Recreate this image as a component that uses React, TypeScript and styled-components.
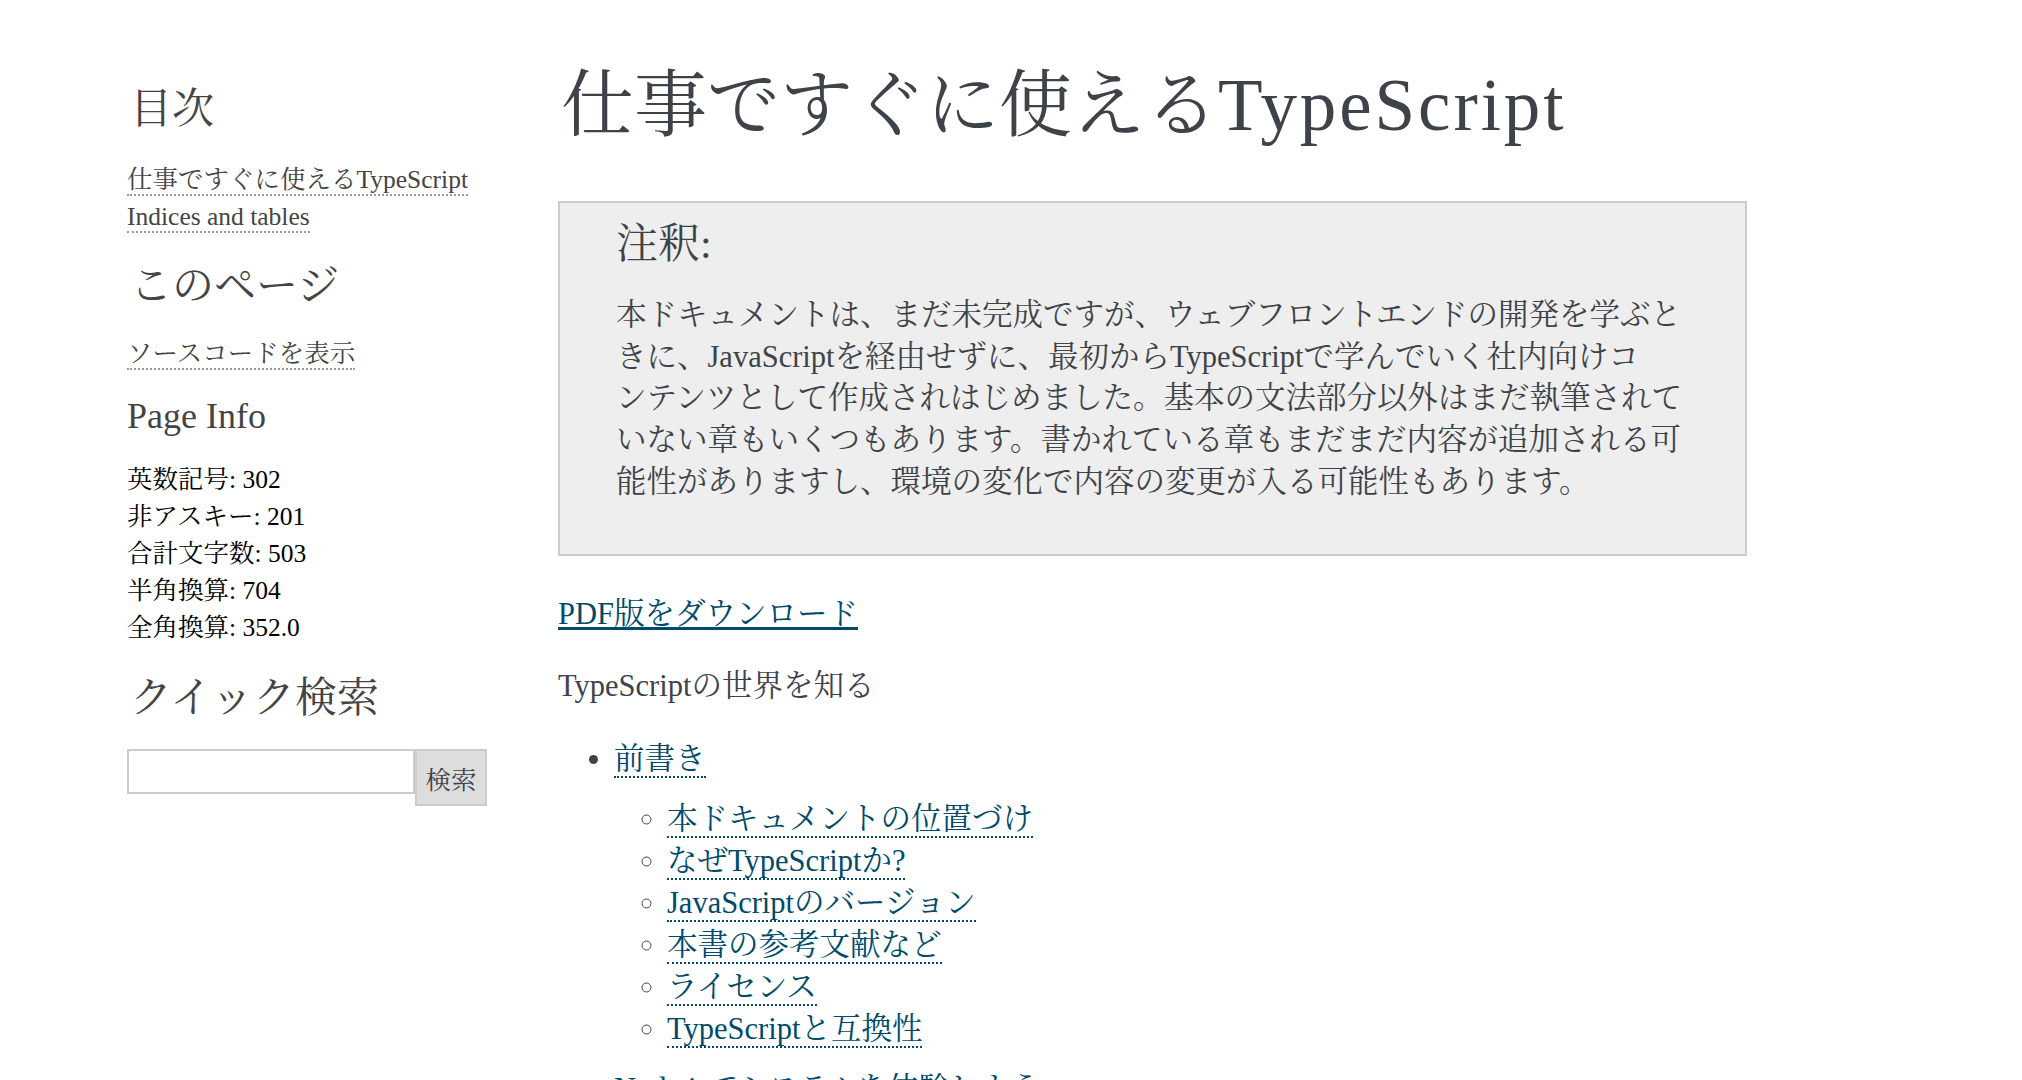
import styled, { createGlobalStyle } from 'styled-components';

const GlobalStyle = createGlobalStyle`
  html, body {
    margin: 0;
    padding: 0;
    background: #fff;
  }
  body {
    font-family: "Liberation Serif", "Noto Serif CJK JP", "Noto Sans CJK JP", serif;
    color: #3e4349;
  }
`;

const Page = styled.div`
  display: flex;
  align-items: flex-start;
  padding-left: 127px;
  height: 1080px;
  overflow: hidden;
`;

const Sidebar = styled.aside`
  width: 431px;
  flex-shrink: 0;
  padding-top: 84px;
  color: #444;
`;

const SideHeading = styled.h3<{ $gap?: number }>`
  margin: ${(p) => p.$gap ?? 0}px 0 0 0;
  font-size: 42px;
  line-height: 50px;
  font-weight: normal;
  color: #444;
  padding-left: 3px;
`;

const SmallHeading = styled.h3`
  margin: 22px 0 0 0;
  font-size: 36px;
  line-height: 44px;
  font-weight: normal;
  color: #444;
`;

const SideList = styled.ul<{ $gap?: number }>`
  list-style: none;
  margin: ${(p) => p.$gap ?? 24}px 0 0 0;
  padding: 0;
  font-size: 25.5px;
  line-height: 37px;
`;

const SideLink = styled.a`
  color: #444;
  text-decoration: none;
  border-bottom: 2px dotted #999;
`;

const InfoList = styled.ul`
  list-style: none;
  margin: 23px 0 0 0;
  padding: 0;
  font-size: 25.5px;
  line-height: 37px;
  color: #000;
`;

const SearchRow = styled.form`
  display: flex;
  align-items: flex-start;
  margin-top: 26px;
`;

const SearchInput = styled.input`
  box-sizing: border-box;
  width: 288px;
  height: 45px;
  border: 2px solid #ccc;
  margin: 0;
  padding: 0 6px;
  font-size: 24px;
  background: #fff;
`;

const SearchButton = styled.button`
  box-sizing: border-box;
  width: 72px;
  height: 57px;
  margin: 0;
  border: 2px solid #ccc;
  background: #ddd;
  color: #3e4349;
  font-family: "Liberation Serif", "Noto Serif CJK JP", "Noto Sans CJK JP", serif;
  font-size: 25.5px;
  padding: 0;
`;

const Main = styled.main`
  width: 1189px;
  flex-shrink: 0;
  padding-top: 63px;
  font-size: 30.5px;
  line-height: 42px;
`;

const Title = styled.h1`
  margin: 0;
  font-size: 73px;
  line-height: 86px;
  font-weight: normal;
  color: #3e4349;
  padding-left: 3px;
`;

const TitleLatin = styled.span`
  letter-spacing: 0.04em;
`;

const Note = styled.div`
  margin-top: 52px;
  background: #eee;
  border: 2px solid #ccc;
  padding: 16px 20px 50px 56px;
`;

const NoteTitle = styled.p`
  margin: 0;
  font-size: 42px;
  line-height: 50px;
`;

const NoteText = styled.p`
  margin: 26px 0 0 0;
  font-size: 30.5px;
  line-height: 41.7px;
`;

const NoteLine = styled.span`
  display: block;
  white-space: nowrap;
`;

const Para = styled.p<{ $gap: number }>`
  margin: ${(p) => p.$gap}px 0 0 0;
`;

const DownloadLink = styled.a`
  color: #004b6b;
  text-decoration: underline;
  text-decoration-thickness: 3px;
  text-underline-offset: 3px;
`;

const TocList = styled.ul<{ $nested?: boolean }>`
  margin: ${(p) => (p.$nested ? '18px 0 0 0' : '31px 0 0 0')};
  padding-left: ${(p) => (p.$nested ? 53 : 56)}px;
  list-style: ${(p) => (p.$nested ? 'circle' : 'disc')};
  line-height: 42px;
`;

const TocItem = styled.li<{ $spaced?: boolean }>`
  margin-top: ${(p) => (p.$spaced ? 18 : 0)}px;
  &::marker {
    color: #3e4349;
  }
`;

const TocLink = styled.a`
  color: #004b6b;
  text-decoration: none;
  border-bottom: 2px dotted #004b6b;
`;

const noteLines = [
  '本ドキュメントは、まだ未完成ですが、ウェブフロントエンドの開発を学ぶと',
  'きに、JavaScriptを経由せずに、最初からTypeScriptで学んでいく社内向けコ',
  'ンテンツとして作成されはじめました。基本の文法部分以外はまだ執筆されて',
  'いない章もいくつもあります。書かれている章もまだまだ内容が追加される可',
  '能性がありますし、環境の変化で内容の変更が入る可能性もあります。',
];

const chapters = [
  '本ドキュメントの位置づけ',
  'なぜTypeScriptか?',
  'JavaScriptのバージョン',
  '本書の参考文献など',
  'ライセンス',
  'TypeScriptと互換性',
];

const pageInfo = [
  ['英数記号', '302'],
  ['非アスキー', '201'],
  ['合計文字数', '503'],
  ['半角換算', '704'],
  ['全角換算', '352.0'],
];

export default function App() {
  return (
    <>
      <GlobalStyle />
      <Page>
        <Sidebar>
          <SideHeading>目次</SideHeading>
          <SideList $gap={27}>
            <li>
              <SideLink href="#">仕事ですぐに使えるTypeScript</SideLink>
            </li>
            <li>
              <SideLink href="#">Indices and tables</SideLink>
            </li>
          </SideList>
          <SideHeading $gap={26}>このページ</SideHeading>
          <SideList>
            <li>
              <SideLink href="#">ソースコードを表示</SideLink>
            </li>
          </SideList>
          <SmallHeading>Page Info</SmallHeading>
          <InfoList>
            {pageInfo.map(([label, value]) => (
              <li key={label}>
                {label}: {value}
              </li>
            ))}
          </InfoList>
          <SideHeading $gap={27}>クイック検索</SideHeading>
          <SearchRow onSubmit={(e) => e.preventDefault()}>
            <SearchInput type="text" />
            <SearchButton type="submit">検索</SearchButton>
          </SearchRow>
        </Sidebar>
        <Main>
          <Title>
            仕事ですぐに使える<TitleLatin>TypeScript</TitleLatin>
          </Title>
          <Note>
            <NoteTitle>注釈:</NoteTitle>
            <NoteText>
              {noteLines.map((line) => (
                <NoteLine key={line}>{line}</NoteLine>
              ))}
            </NoteText>
          </Note>
          <Para $gap={37}>
            <DownloadLink href="#">PDF版をダウンロード</DownloadLink>
          </Para>
          <Para $gap={30}>TypeScriptの世界を知る</Para>
          <TocList>
            <TocItem>
              <TocLink href="#">前書き</TocLink>
              <TocList $nested>
                {chapters.map((c) => (
                  <TocItem key={c}>
                    <TocLink href="#">{c}</TocLink>
                  </TocItem>
                ))}
              </TocList>
            </TocItem>
            <TocItem $spaced>
              <TocLink href="#">Node.jsでシステムを体験しよう</TocLink>
            </TocItem>
          </TocList>
        </Main>
      </Page>
    </>
  );
}
